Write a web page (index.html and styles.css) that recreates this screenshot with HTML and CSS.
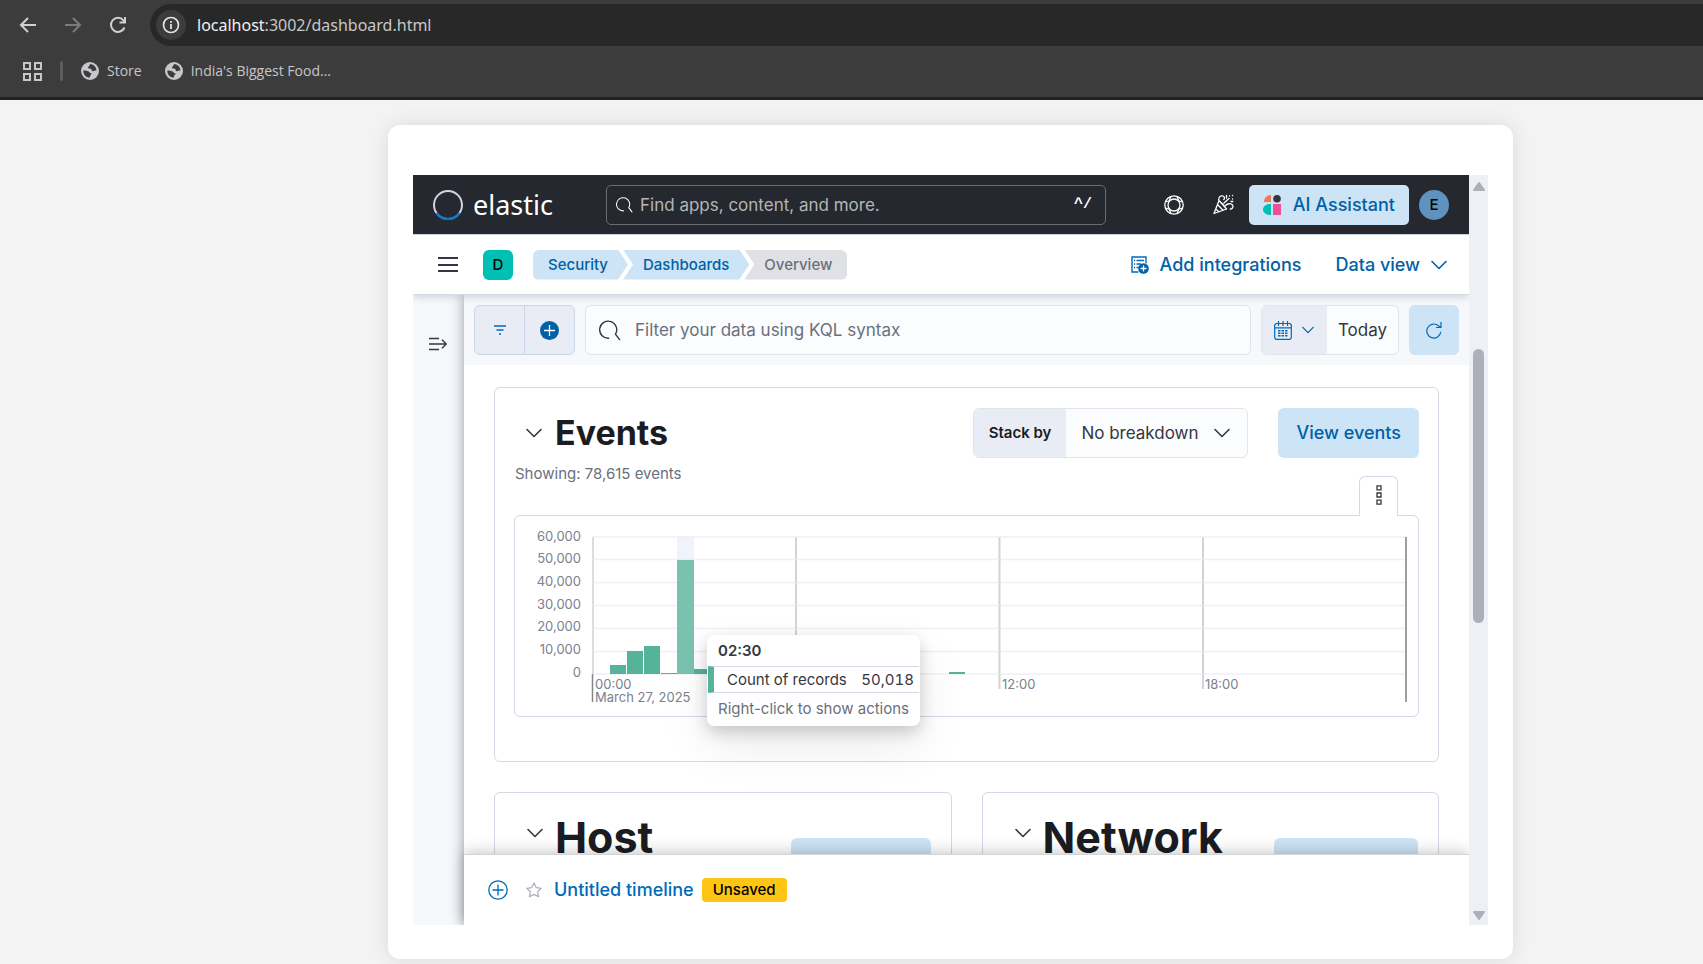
FILE: index.html
```html
<!DOCTYPE html>
<html lang="en">
<head>
<meta charset="utf-8">
<title>Overview - Elastic</title>
<link rel="stylesheet" href="styles.css">
</head>
<body>
<svg class="defs" aria-hidden="true">
  <symbol id="chevron" viewBox="0 0 16 16"><path d="M1 4.500l7 7 7-7" fill="none" stroke="currentColor" stroke-width="1.600" stroke-linecap="round" stroke-linejoin="round"/></symbol>
  <symbol id="globe" viewBox="0 0 18 18"><circle cx="9" cy="9" r="9" fill="#c7c8cc"/><path d="M9.500 2c-1.500 1-1 2-2 2.800-1 .8-.5 1.700.5 1.800 1.500.1 2.500.2 2.700 1.600.1 1.200 1.200 1.300 2 .8.800-.5 1.700-.7 2.800-.3A6.500 6.500 0 0 0 9.500 2zM2.300 8.500c1.700.2 3.700.2 4.700.7 1.500.7 1.800 1.800 3 2 1 .3.400 1.500-.5 2-.8.500-.5 1.500-.4 2.400-3.900.3-6.900-2.900-6.800-7.100z" fill="#3c3c3c"/></symbol>
  <symbol id="search" viewBox="0 0 16 16"><path d="M7 14A6.200 6.200 0 1 1 12 11l3 4" fill="none" stroke="currentColor" stroke-linecap="round"/></symbol>
</svg>

<header class="browser">
  <div class="toolbar">
    <button class="tool" aria-label="Back"><svg width="18" height="18" viewBox="0 0 18 18"><path d="M17 9H2M9 2L2 9l7 7" fill="none" stroke="#d0d0d0" stroke-width="2"/></svg></button>
    <button class="tool" aria-label="Forward"><svg width="18" height="18" viewBox="0 0 18 18"><path d="M1 9h15M9 2l7 7-7 7" fill="none" stroke="#7c7c7c" stroke-width="2"/></svg></button>
    <button class="tool" aria-label="Reload"><svg width="18" height="18" viewBox="0 0 18 18"><path d="M15.500 11.500A7 7 0 1 1 14.500 4.500L16 6.500M10.500 6.500H16V1" fill="none" stroke="#d0d0d0" stroke-width="2"/></svg></button>
    <div class="address">
      <button class="site-info" aria-label="Site information"><svg width="18" height="18" viewBox="0 0 18 18"><circle cx="9" cy="9" r="7.500" fill="none" stroke="#e3e3e3" stroke-width="1.700"/><path d="M9 8v5M9 5v1.700" stroke="#e3e3e3" stroke-width="1.800"/></svg></button>
      <span class="url"><b>localhost</b>:3002/dashboard.html</span>
    </div>
  </div>
  <nav class="bookmarks" aria-label="Bookmarks">
    <button class="apps" aria-label="Apps"><svg width="19" height="19" viewBox="0 0 19 19"><path d="M1 1h6v6H1zM12 1h6v6h-6zM1 12h6v6H1zM12 12h6v6h-6z" fill="none" stroke="#c7c7c7" stroke-width="2"/></svg></button>
    <span class="divider"></span>
    <a href="#store"><svg width="18" height="18"><use href="#globe"/></svg>Store</a>
    <a href="#food"><svg width="18" height="18"><use href="#globe"/></svg>India's Biggest Food...</a>
  </nav>
</header>

<main class="page">
  <div class="card">
    <div class="frame">
      <div class="app">
        <header class="top">
          <a class="logo" href="#home"><svg width="30" height="30" viewBox="0 0 30 30"><circle cx="15" cy="15" r="14" fill="none" stroke="#d0d4de" stroke-width="2"/><path d="M3.500 23A14 14 0 0 0 26.500 23" fill="none" stroke="#0b78cc" stroke-width="2.200"/></svg><span>elastic</span></a>
          <label class="find"><svg width="17" height="17"><use href="#search"/></svg><input type="search" placeholder="Find apps, content, and more." aria-label="Find apps, content, and more"><kbd>^/</kbd></label>
          <div class="top-actions">
            <button class="icon-btn help" aria-label="Help"><svg width="20" height="20" viewBox="0 0 20 20" fill="none" stroke="#fff" stroke-width="1.300"><circle cx="10" cy="10" r="9.200"/><circle cx="10" cy="10" r="6"/><path d="M7 1.500l-1.800 4.300M5.200 5.800L1.500 7M13 1.500l1.800 4.300M14.800 5.800l3.700 1.200M18.500 13l-3.700 1.200M14.800 14.200L13 18.500M7 18.500l-1.800-4.300M5.200 14.200L1.500 13"/></svg></button>
            <button class="icon-btn" aria-label="What's new"><svg width="21" height="21" viewBox="0 0 21 21" fill="none" stroke="#fff" stroke-width="1.300" stroke-linejoin="round" stroke-linecap="round"><path d="M6 6.500L1 19.500l12.500-4.500zM4.500 10.500l5.500 5.700M2.800 15l3 2.800M6 6.500c2.500 2 5.500 5.500 7.500 8.500M5.800 6c-.3-2.800 1.600-4.800 4.200-4 1.800.6 1.800 2.800.8 3.600M11 9l5-4.500M12.500 11.500c2-2 5.500-2.500 7-.5 1.200 2-.2 4.500-2.300 4"/><path d="M13.500 4V1.500M16.500 2h.1M19.500 1.500h.1M19.500 5h.1M18 7.500h1.800"/></svg></button>
            <button class="btn assistant"><svg width="18" height="20" viewBox="0 0 18 20"><path d="M8 0v7H1C1 3 4 0 8 0z" fill="#fa744e"/><circle cx="14" cy="3.800" r="3.800" fill="#343741"/><path d="M8 9v11C3.500 20 0 18 0 14.500S3.500 9 8 9z" fill="#00bfb3"/><path d="M10 9h8v11h-8z" fill="#f04e98"/></svg>AI Assistant</button>
            <button class="avatar" aria-label="Account">E</button>
          </div>
        </header>
        <div class="subnav">
          <button class="icon-btn menu" aria-label="Menu"><svg width="20" height="16" viewBox="0 0 20 16"><path d="M0 1h20M0 8h20M0 14h20" stroke="#343741" stroke-width="2"/></svg></button>
          <button class="space" aria-label="Default space">D</button>
          <nav class="crumbs" aria-label="Breadcrumbs">
            <a class="crumb first" href="#security">Security</a>
            <a class="crumb" href="#dashboards">Dashboards</a>
            <span class="crumb last">Overview</span>
          </nav>
          <div class="links">
            <a href="#integrations"><svg width="18" height="18" viewBox="0 0 18 18"><path d="M7.500 16H1V1h14v6.500" fill="none" stroke="#006bb8" stroke-width="1.400"/><path d="M3 4.500h1.200M5.500 4.500H13M3 8h1.200M5.500 8H10M3 11.500h1.200M5.500 11.500H7.500" stroke="#006bb8" stroke-width="1.300"/><circle cx="12.500" cy="12.500" r="5.300" fill="#0061a6"/><path d="M12.500 9.500v6M9.500 12.500h6" stroke="#fff" stroke-width="1.300"/></svg>Add integrations</a>
            <button class="data-view">Data view<svg width="16" height="16"><use href="#chevron"/></svg></button>
          </div>
        </div>
        <div class="workspace">
          <aside class="rail"><button class="icon-btn" aria-label="Expand"><svg width="18" height="14" viewBox="0 0 18 14"><path d="M0 1.500h10M0 7h17M0 12.500h10M13 2.800L17.300 7 13 11.200" fill="none" stroke="#343741" stroke-width="1.400"/></svg></button></aside>
          <section class="content">
            <form class="filters">
              <div class="group filter-group">
                <button type="button" aria-label="Saved queries"><svg width="12" height="10" viewBox="0 0 12 10"><path d="M0 1h12M2.500 5h7M5 9h2" stroke="#006bb8" stroke-width="1.500"/></svg></button>
                <button type="button" aria-label="Add filter"><svg width="19" height="19" viewBox="0 0 19 19"><circle cx="9.500" cy="9.500" r="9.500" fill="#0061a6"/><path d="M9.500 4v11M4 9.500h11" stroke="#fff" stroke-width="1.300"/></svg></button>
              </div>
              <label class="kql"><svg width="22" height="22"><use href="#search"/></svg><input type="text" placeholder="Filter your data using KQL syntax" aria-label="Filter your data using KQL syntax"></label>
              <div class="group dates">
                <button type="button" class="calendar" aria-label="Date quick select"><svg width="18" height="19" viewBox="0 0 18 19"><path d="M2 2.500h14l1.300 1.300v13L16 18.300H2L.7 17V3.800zM.7 6.800h16.600M4.500 0v5M13.500 0v5M9 0v5" fill="none" stroke="#006bb8" stroke-width="1.200"/><path d="M4 9.800h10M4 12.300h10M4 14.800h10" stroke="#006bb8" stroke-width="1.400" stroke-dasharray="2.500 1"/></svg><svg width="12" height="12"><use href="#chevron"/></svg></button>
                <button type="button" class="today">Today</button>
              </div>
              <button type="button" class="refresh" aria-label="Refresh"><svg width="16" height="17" viewBox="0 0 16 17"><path d="M14.800 9.800A7 7 0 1 1 12.500 3.800L14.500 5.500M10 5.500h5V0" fill="none" stroke="#006bb8" stroke-width="1.200"/></svg></button>
            </form>
            <div class="board">
              <section class="panel events">
                <div class="panel-head">
                  <button class="toggle" aria-label="Collapse events"><svg width="16" height="16"><use href="#chevron"/></svg></button>
                  <h1>Events</h1>
                  <div class="stack">
                    <label for="stack">Stack by</label>
                    <span class="select-wrap"><select id="stack"><option>No breakdown</option></select><svg width="16" height="16"><use href="#chevron"/></svg></span>
                  </div>
                  <button class="btn">View events</button>
                </div>
                <p class="showing">Showing: 78,615 events</p>
                <div class="chart">
                  <button class="tab" aria-label="Panel options"><svg width="6" height="20" viewBox="0 0 6 20"><path d="M1 .8h4v4H1zM1 8h4v4H1zM1 15.200h4v4H1z" fill="none" stroke="#343741" stroke-width="1.300"/></svg></button>
                  <svg class="plot" viewBox="0 0 903 200" role="img" aria-label="Count of records over time">
                    <rect x="162" y="21" width="17" height="137" fill="#f0f3fb"/>
                    <path d="M78 21v137" stroke="#d0d1d6" stroke-width="1.500"/>
                    <path d="M281 21v152M484.500 21v152M688 21v152" stroke="#d3d3d5" stroke-width="2"/>
                    <path d="M77 21h814M77 43.500h814M77 66.500h814M77 89.500h814M77 112.500h814M77 135.500h814M77 158h814" stroke="#e6eaf3" stroke-opacity=".65" stroke-width="1.500"/>
                    <g fill="#54b399"><rect x="95" y="149" width="16" height="9"/><rect x="112" y="135" width="16" height="23"/><rect x="129" y="130" width="16" height="28"/><rect x="146" y="157" width="16" height="1"/><rect x="162" y="44" width="17" height="114" fill="#79c3ae"/><rect x="179" y="153" width="16" height="5"/><rect x="434" y="156" width="16" height="2"/></g>
                    <path d="M77.500 158v28" stroke="#85868a" stroke-width="1.500"/><path d="M891 21v165" stroke="#7e7f82" stroke-width="1.500"/>
                    <g class="ticks-y"><text x="66" y="25">60,000</text><text x="66" y="47">50,000</text><text x="66" y="70">40,000</text><text x="66" y="93">30,000</text><text x="66" y="115">20,000</text><text x="66" y="138">10,000</text><text x="66" y="161">0</text></g>
                    <g class="ticks-x"><text x="80" y="173">00:00</text><text x="80" y="186">March 27, 2025</text><text x="487" y="173">12:00</text><text x="690" y="173">18:00</text></g>
                  </svg>
                  <div class="tooltip" role="tooltip">
                    <strong>02:30</strong>
                    <div class="tip-row"><span>Count of records</span><span class="value">50,018</span></div>
                    <small>Right-click to show actions</small>
                  </div>
                </div>
              </section>
              <div class="pair">
                <section class="panel half">
                  <button class="toggle" aria-label="Collapse host"><svg width="16" height="16"><use href="#chevron"/></svg></button>
                  <h2>Host</h2>
                  <button class="btn" aria-label="View host"></button>
                </section>
                <section class="panel half network">
                  <button class="toggle" aria-label="Collapse network"><svg width="16" height="16"><use href="#chevron"/></svg></button>
                  <h2>Network</h2>
                  <button class="btn" aria-label="View network"></button>
                </section>
              </div>
            </div>
            <footer class="timeline">
              <button class="icon-btn" aria-label="New timeline"><svg width="20" height="20" viewBox="0 0 20 20"><circle cx="10" cy="10" r="9.200" fill="none" stroke="#006bb8" stroke-width="1.300"/><path d="M10 4.500v11M4.500 10h11" stroke="#006bb8" stroke-width="1.300"/></svg></button>
              <button class="icon-btn" aria-label="Favorite"><svg width="16" height="16" viewBox="0 0 16 16"><path d="M8 1l2.200 4.600 5 .7-3.600 3.500.9 5L8 12.400l-4.500 2.400.9-5L.8 6.300l5-.7z" fill="none" stroke="#a9afbd" stroke-width="1.200" stroke-linejoin="round"/></svg></button>
              <a href="#timeline">Untitled timeline</a>
              <span class="badge">Unsaved</span>
            </footer>
          </section>
        </div>
      </div>
      <div class="scrollbar" aria-hidden="true">
        <svg width="12" height="9" viewBox="0 0 12 9"><path d="M6 1l5 7H1z" fill="#adafb9" stroke="#adafb9" stroke-width="2" stroke-linejoin="round"/></svg>
        <div class="track"><span class="thumb"></span></div>
        <svg width="12" height="10" viewBox="0 0 12 10"><path d="M6 9L1 2h10z" fill="#adafb9" stroke="#adafb9" stroke-width="2" stroke-linejoin="round"/></svg>
      </div>
    </div>
  </div>
</main>
</body>
</html>
```
FILE: styles.css
```css
* { box-sizing: border-box; }
body { margin: 0; height: 100vh; overflow: hidden; background: #f3f3f3; color: #343741; font: 18px/24px Inter, "Liberation Sans", sans-serif; }
button, input, select { font: inherit; color: inherit; border: 0; padding: 0; margin: 0; background: none; }
button { display: flex; align-items: center; justify-content: center; }
input, select, .today { font-size: 17px; }
a { color: inherit; text-decoration: none; }
svg { display: block; flex: none; }
h1, h2, p { margin: 0; }
.defs { position: absolute; width: 0; height: 0; }

.browser { height: 100px; background: #3c3c3c; border-bottom: 3px solid #222; font-family: "Open Sans", "Noto Sans", sans-serif; padding-top: 4px; }
.toolbar { display: flex; align-items: center; padding-left: 18px; }
.tool { width: 20px; height: 42px; margin-right: 25px; }
.tool:nth-child(3) { margin-right: 22px; }
.address { flex: 1; display: flex; align-items: center; gap: 11px; height: 42px; padding-left: 6px; background: #282828; border-radius: 21px 0 0 21px; }
.site-info { width: 30px; height: 30px; border-radius: 50%; background: #3c3c3c; }
.url { color: #c7c7c7; font-family: "Noto Sans", sans-serif; font-size: 16px; }
.url b { color: #f0f0f0; font-weight: 400; }
.bookmarks { display: flex; align-items: center; height: 50px; padding-left: 23px; color: #c7c7c7; font-size: 14px; }
.bookmarks a { display: flex; align-items: center; gap: 8px; margin-right: 23px; }
.divider { width: 3px; height: 20px; margin: 0 18px; background: #5c5c5c; border-radius: 2px; }

.page { padding: 25px 190px 0 388px; }
.card { padding: 50px 25px 34px; background: #fff; border-radius: 12px; box-shadow: 0 0 20px rgba(0, 0, 0, .1); }
.frame { display: flex; height: calc(100vh - 214px); overflow: hidden; }
.app { flex: 1; min-width: 0; display: flex; flex-direction: column; }
.btn { height: 50px; padding: 0 18px; border-radius: 6px; background: #cce4f5; color: #0061a6; font-weight: 500; }

.top { display: flex; align-items: center; height: 60px; padding: 0 20px; background: #25282f; border-bottom: 1px solid #d3dae6; color: #fff; }
.logo { display: flex; align-items: center; gap: 10px; width: 173px; font: 27px/30px "Noto Sans", sans-serif; }
.find { flex: 0 1 500px; display: flex; align-items: center; gap: 7px; height: 40px; padding: 0 13px 0 9px; border: 1px solid #6b6d72; border-radius: 5px; }
.find input { flex: 1; min-width: 0; outline: 0; }
.find input::placeholder { color: #b4b5b8; opacity: 1; }
.find kbd { font: 700 15px/24px "Liberation Mono", monospace; }
.top-actions { display: flex; align-items: center; margin-left: auto; }
.icon-btn { width: 40px; height: 40px; }
.help { margin-right: 10px; }
.assistant { height: 40px; margin: 0 10px 0 5px; padding: 0 14px; gap: 12px; border-radius: 5px; }
.avatar { width: 30px; height: 30px; border-radius: 50%; background: #6092c0; color: #000; font-size: 15px; font-weight: 500; }

.subnav { position: relative; z-index: 2; display: flex; align-items: center; height: 60px; padding: 0 22px 0 15px; background: #fff; border-bottom: 1px solid #d3dae6; box-shadow: 0 2px 8px rgba(52, 55, 65, .2); }
.space { width: 30px; height: 30px; margin: 0 20px 0 15px; border-radius: 6px; background: #00bfb3; color: #000; font-size: 15px; font-weight: 500; }
.crumbs { display: flex; color: #0061a6; font-size: 15px; font-weight: 500; }
.crumb { height: 30px; padding: 0 20px; margin-left: -5px; line-height: 30px; background: #cce4f5; clip-path: polygon(0 0, calc(100% - 10px) 0, 100% 50%, calc(100% - 10px) 100%, 0 100%, 10px 50%); }
.first { margin-left: 0; padding-left: 15px; border-radius: 6px 0 0 6px; clip-path: polygon(0 0, calc(100% - 10px) 0, 100% 50%, calc(100% - 10px) 100%, 0 100%); }
.last { padding-right: 15px; border-radius: 0 6px 6px 0; background: #e0e1e4; color: #69707d; clip-path: polygon(0 0, 100% 0, 100% 100%, 0 100%, 10px 50%); }
.links { display: flex; align-items: center; gap: 34px; margin-left: auto; color: #0061a6; font-weight: 500; }
.links a, .data-view { display: flex; align-items: center; gap: 11px; }
.data-view { font-weight: 500; }

.workspace { flex: 1; min-height: 0; display: flex; background: #f6f8fc; }
.rail { width: 51px; padding: 29px 5px; }
.content { position: relative; flex: 1; min-width: 0; display: flex; flex-direction: column; background: #fff; box-shadow: 0 0 12px rgba(52, 55, 65, .5); }
.filters { display: flex; gap: 10px; padding: 10px; background: #f6f8fc; height: 70px; flex: none; }
.group, .stack { display: flex; height: 50px; overflow: hidden; border: 1px solid #e1e4ea; border-radius: 6px; background: #fbfcfd; }
.filter-group { width: 101px; border-color: #cbd5e8; background: #e9ecf4; }
.filter-group button { flex: 1; }
.filter-group button + button { border-left: 1px solid #cbd5e8; }
.kql { flex: 1; display: flex; align-items: center; gap: 14px; padding-left: 13px; border: 1px solid #e1e4ea; border-radius: 6px; background: #fbfcfd; }
.kql input { flex: 1; min-width: 0; outline: 0; }
.kql input::placeholder { color: #69707d; opacity: 1; }
.calendar { width: 65px; gap: 10px; background: #e9ecf4; color: #0061a6; }
.today { padding: 0 11px; }
.refresh { width: 50px; height: 50px; border-radius: 6px; background: #cce4f5; }

.board { flex: 1; min-height: 0; overflow: hidden; padding: 22px 30px 0; }
.panel { border: 1px solid #d3dae6; border-radius: 6px; padding: 20px 20px 0; }
.events { padding-right: 19px; padding-left: 19px; height: 375px; }
.panel-head { display: flex; align-items: center; }
.toggle { width: 40px; height: 40px; }
h1 { margin: 0 auto 0 1px; color: #1a1c21; font-size: 34px; line-height: 40px; font-weight: 700; }
.stack { margin-right: 30px; }
.stack label { padding: 0 15px; background: #e9ecf4; color: #1a1c21; font-size: 15px; font-weight: 600; line-height: 48px; }
.select-wrap { position: relative; display: flex; align-items: center; }
.select-wrap select { appearance: none; height: 48px; padding: 0 48px 0 15px; outline: 0; }
.select-wrap svg { position: absolute; right: 17px; pointer-events: none; }
.showing { margin: 4px 1px 29px; color: #69707d; font-size: 15px; }
.chart { position: relative; border: 1px solid #d3dae6; border-radius: 6px; }
.tab { position: absolute; top: -40px; right: 20px; width: 39px; height: 40px; padding-bottom: 3px; border: 1px solid #d3dae6; border-bottom: 0; border-radius: 6px 6px 0 0; background: #fff; }
.plot { width: 100%; height: auto; }
.plot text { font-size: 13px; fill: #7b818d; }
.ticks-y { text-anchor: end; }
.tooltip { position: absolute; left: 192px; top: 119px; width: 213px; background: #fff; border-radius: 7px; font-size: 15px; box-shadow: 0 6px 16px rgba(0, 0, 0, .18), 0 20px 50px rgba(0, 0, 0, .08); }
.tooltip strong { display: block; padding: 4px 11px 3px; font-weight: 600; }
.tip-row { display: flex; justify-content: space-between; margin: 0 1px; padding: 1px 5px 0 13px; border: 1px solid #d3dae6; border-width: 1px 0; border-left: 6px solid #54b399; }
.value { font-variant-numeric: tabular-nums; }
.tooltip small { display: block; padding: 4px 11px 5px; font-size: 15px; color: #69707d; white-space: nowrap; }

.pair { display: grid; grid-template-columns: 1fr 1fr; gap: 30px; margin-top: 30px; }
.half { display: flex; height: 200px; }
.half .btn { width: 140px; margin: 25px 0 0 auto; }
.network .btn { width: 144px; }
h2 { color: #1a1c21; font-size: 43px; line-height: 48px; font-weight: 700; }
.timeline { position: relative; flex: none; display: flex; align-items: center; height: 71px; padding-left: 16px; background: #fff; border-top: 1px solid #d3d4d8; box-shadow: 0 -2px 14px rgba(0, 0, 0, .22); color: #006bb8; }
.timeline .icon-btn { width: 36px; }
.timeline a { margin-left: 2px; font-weight: 500; }
.badge { margin-left: 8px; padding: 0 11px; border-radius: 4px; background: #fec514; color: #000; font-size: 15px; font-weight: 500; }

.scrollbar { position: relative; z-index: 3; width: 19px; display: flex; flex-direction: column; align-items: center; justify-content: space-between; padding: 7px 0 5px; background: #eff0f5; }
.track { flex: 1; width: 11px; padding: 158px 0 0; }
.thumb { display: block; height: 40%; min-height: 274px; background: #adafb9; border-radius: 6px; }
```
